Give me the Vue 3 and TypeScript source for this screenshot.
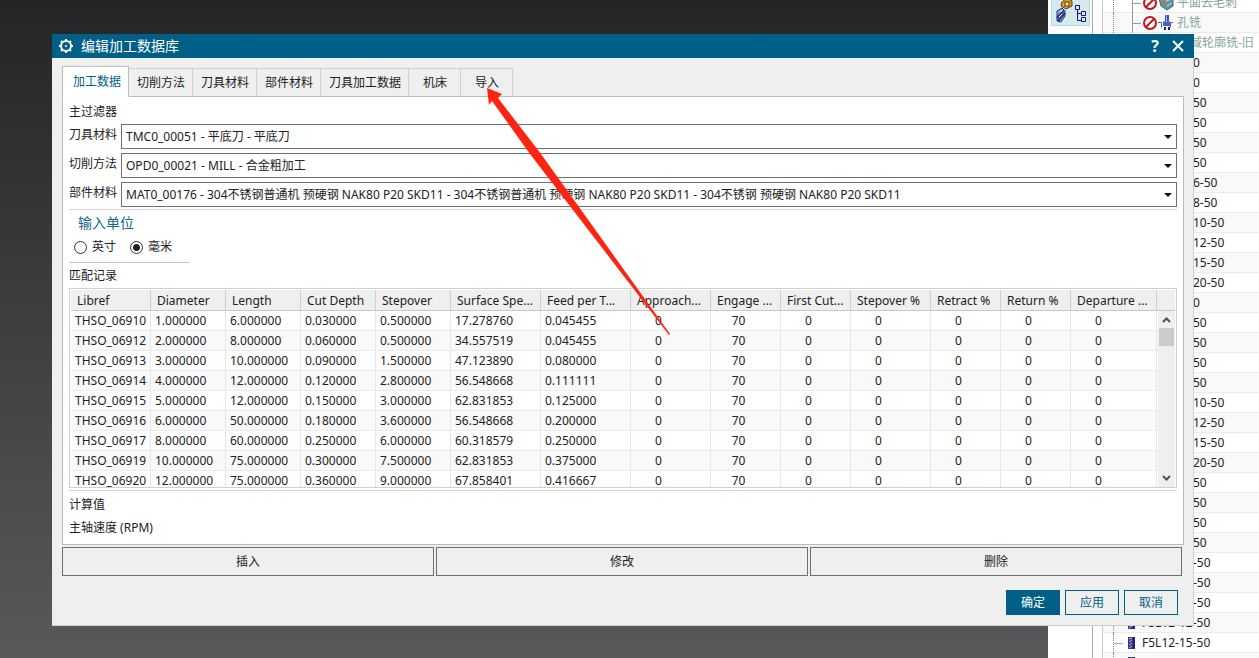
<script setup lang="ts">
import { ref } from 'vue'

interface TreeRow {
  text: string
  kind: 'operation' | 'group' | 'tail' | 'tool'
  icon?: 'mill' | 'hole' | 'tool'
}

const tails = [
  '0', '0', '50', '50', '50', '50', '6-50', '8-50', '10-50', '12-50', '15-50', '20-50',
  '0', '50', '50', '50', '50', '10-50', '12-50', '15-50', '20-50',
  '50', '50', '50', '50', '-50', '-50', '-50',
]

const treeRows: TreeRow[] = [
  { text: '平面去毛刺', kind: 'operation', icon: 'mill' },
  { text: '孔铣', kind: 'operation', icon: 'hole' },
  { text: '域轮廓铣-旧', kind: 'group' },
  ...tails.map((text): TreeRow => ({ text, kind: 'tail' })),
  { text: 'F5L12-12-50', kind: 'tool', icon: 'tool' },
  { text: 'F5L12-15-50', kind: 'tool', icon: 'tool' },
  { text: '', kind: 'tool', icon: 'tool' },
]

const tabs = ['加工数据', '切削方法', '刀具材料', '部件材料', '刀具加工数据', '机床', '导入']
const activeTab = ref('加工数据')

const filters = [
  { id: 'tool-material', label: '刀具材料', value: 'TMC0_00051 - 平底刀 - 平底刀' },
  { id: 'cut-method', label: '切削方法', value: 'OPD0_00021 - MILL - 合金粗加工' },
  {
    id: 'part-material',
    label: '部件材料',
    value: 'MAT0_00176 - 304不锈钢普通机 预硬钢 NAK80 P20 SKD11 - 304不锈钢普通机 预硬钢 NAK80 P20 SKD11 - 304不锈钢 预硬钢 NAK80 P20 SKD11',
  },
]

const unit = ref('mm')

const columns = [
  'Libref', 'Diameter', 'Length', 'Cut Depth', 'Stepover', 'Surface Spe...', 'Feed per T...',
  'Approach...', 'Engage ...', 'First Cut...', 'Stepover %', 'Retract %', 'Return %', 'Departure ...',
]

const percents = ['0', '70', '0', '0', '0', '0', '0']

const records: string[][] = [
  ['THSO_06910', '1.000000', '6.000000', '0.030000', '0.500000', '17.278760', '0.045455'],
  ['THSO_06912', '2.000000', '8.000000', '0.060000', '0.500000', '34.557519', '0.045455'],
  ['THSO_06913', '3.000000', '10.000000', '0.090000', '1.500000', '47.123890', '0.080000'],
  ['THSO_06914', '4.000000', '12.000000', '0.120000', '2.800000', '56.548668', '0.111111'],
  ['THSO_06915', '5.000000', '12.000000', '0.150000', '3.000000', '62.831853', '0.125000'],
  ['THSO_06916', '6.000000', '50.000000', '0.180000', '3.600000', '56.548668', '0.200000'],
  ['THSO_06917', '8.000000', '60.000000', '0.250000', '6.000000', '60.318579', '0.250000'],
  ['THSO_06919', '10.000000', '75.000000', '0.300000', '7.500000', '62.831853', '0.375000'],
  ['THSO_06920', '12.000000', '75.000000', '0.360000', '9.000000', '67.858401', '0.416667'],
]

const editActions = ['插入', '修改', '删除']
</script>

<template>
  <div class="desktop">
    <div class="viewport"></div>
    <div class="strip">
      <button class="strip-tool" type="button" aria-label="程序视图">
        <svg width="38" height="26" viewBox="0 0 38 26" aria-hidden="true">
          <path d="M5 11l5-3 3 3v5l-4 6-4-1z" fill="#8fa6dc" stroke="#26357f" />
          <path d="M5 18l7-8M6 21l7-8" stroke="#26357f" stroke-width="2" />
          <path d="M8 12l3-2M7 17l3-3" stroke="#fff" />
          <path d="M10 2l5-4 5 3v5l-6 3-5-3z" fill="#d99b3e" stroke="#5e3a12" />
          <rect x="13" y="2" width="4" height="4" fill="#ffe680" stroke="#5e3a12" />
          <path d="M25.500 9.500v11h4M25.500 13.500h4" fill="none" stroke="#10147c" />
          <path d="M23.500 5.500h4v4h-4zM29.500 11.500h4v4h-4zM29.500 17.500h4v4h-4z" fill="#d5eef2" stroke="#10147c" />
        </svg>
      </button>
    </div>
    <div class="tree">
      <div v-for="(row, i) in treeRows" :key="i" class="tree-row" :class="row.kind">
        <svg v-if="row.kind === 'operation'" class="ban" width="15" height="16" viewBox="0 0 15 16" aria-hidden="true">
          <circle cx="7" cy="8" r="6" fill="#fff" stroke="#c4141c" stroke-width="2" />
          <path d="M3 12l8-8" stroke="#c4141c" stroke-width="2" />
        </svg>
        <svg v-if="row.icon === 'mill'" class="op-icon" width="16" height="16" viewBox="0 0 16 16" aria-hidden="true">
          <path d="M1 4l7-3 7 3v7l-6 4-6-4z" fill="#5b98a4" stroke="#47666f" />
          <path d="M3 4l5 2v5l-4-2z" fill="#9b8062" />
          <path d="M8 6l6-2M9 11l5-3" stroke="#b6dde4" />
        </svg>
        <svg v-if="row.icon === 'hole'" class="op-icon" width="16" height="16" viewBox="0 0 16 16" aria-hidden="true">
          <path d="M7 0h4v6H7z" fill="#3e49bd" />
          <path d="M8 0h1v6H8z" fill="#aab2f5" />
          <path d="M0 7.500h3.500v5M15 7.500h-2.500v5" fill="none" stroke="#347080" />
          <path d="M5 6h7v5H5z" fill="#7e89e6" />
          <path d="M5 8h7M5 10h7" stroke="#252e8f" />
          <path d="M6 12h2v3H6zM10 12h2v3h-2z" fill="#18216d" />
        </svg>
        <svg v-if="row.icon === 'tool'" class="tool-icon" width="8" height="14" viewBox="0 0 8 14" aria-hidden="true">
          <path d="M0 1h7v12H0z" fill="#34338f" />
          <path d="M1 3l3-1M1 6l3-2M1 9l3-2M1 12l3-2" stroke="#b8b8f0" />
          <path d="M5 1h2v12H5z" fill="#222266" />
        </svg>
        <span>{{ row.text }}</span>
      </div>
    </div>

    <section class="dialog" role="dialog" aria-labelledby="dialog-title">
      <header class="titlebar">
        <svg width="16" height="16" viewBox="0 0 16 16" aria-hidden="true">
          <circle cx="8" cy="8" r="5" fill="none" stroke="#fff" stroke-width="2" />
          <path d="M8 1v2M8 13v2M1 8h2M13 8h2M3 3l1 1M12 12l1 1M3 13l1-1M12 4l1-1" stroke="#fff" stroke-width="2" />
          <circle cx="8" cy="8" r="1" fill="#fff" />
        </svg>
        <h1 id="dialog-title">编辑加工数据库</h1>
        <button class="title-button help" type="button" aria-label="帮助">?</button>
        <button class="title-button" type="button" aria-label="关闭">
          <svg width="12" height="12" viewBox="0 0 12 12" aria-hidden="true">
            <path d="M1 1l10 10M11 1L1 11" stroke="#fff" stroke-width="2" />
          </svg>
        </button>
      </header>

      <div class="content">
        <nav class="tabs" role="tablist">
          <button
            v-for="tab in tabs"
            :key="tab"
            type="button"
            role="tab"
            :class="{ active: tab === activeTab }"
            :aria-selected="tab === activeTab"
            @click="activeTab = tab"
          >{{ tab }}</button>
        </nav>

        <div class="panel">
          <h2 class="caption">主过滤器</h2>
          <div v-for="filter in filters" :key="filter.id" class="filter">
            <label :for="filter.id">{{ filter.label }}</label>
            <div class="select-box">
              <select :id="filter.id">
                <option>{{ filter.value }}</option>
              </select>
              <svg width="8" height="4" viewBox="0 0 8 4" aria-hidden="true">
                <path d="M0 0h8L4 4z" fill="#111" />
              </svg>
            </div>
          </div>

          <fieldset class="units">
            <legend>输入单位</legend>
            <div class="radios">
              <label><input v-model="unit" type="radio" name="unit" value="inch" />英寸</label>
              <label><input v-model="unit" type="radio" name="unit" value="mm" />毫米</label>
            </div>
          </fieldset>

          <h2 class="caption records-caption">匹配记录</h2>
          <div class="records">
            <table>
              <colgroup>
                <col class="w80" /><col class="w75" /><col class="w75" /><col class="w75" /><col class="w75" />
                <col class="w90" /><col class="w90" /><col class="w80" /><col class="w70" /><col class="w70" />
                <col class="w80" /><col class="w70" /><col class="w70" /><col class="w86" /><col />
              </colgroup>
              <thead>
                <tr>
                  <th v-for="column in columns" :key="column" scope="col">{{ column }}</th>
                  <td></td>
                </tr>
              </thead>
              <tbody>
                <tr v-for="record in records" :key="record[0]">
                  <td v-for="(value, i) in record" :key="i">{{ value }}</td>
                  <td v-for="(value, i) in percents" :key="'p' + i" class="percent"><span>{{ value }}</span></td>
                  <td></td>
                </tr>
              </tbody>
            </table>
            <div class="scrollbar">
              <svg width="9" height="6" viewBox="0 0 9 6" aria-hidden="true">
                <path d="M1 5l3.500-3.500L8 5" fill="none" stroke="#505050" stroke-width="2" />
              </svg>
              <div class="thumb"></div>
              <svg width="9" height="6" viewBox="0 0 9 6" aria-hidden="true">
                <path d="M1 1l3.500 3.500L8 1" fill="none" stroke="#505050" stroke-width="2" />
              </svg>
            </div>
          </div>

          <div class="computed">
            <h2>计算值</h2>
            <p>主轴速度 (RPM)</p>
          </div>
        </div>

        <div class="edit-actions">
          <button v-for="action in editActions" :key="action" type="button">{{ action }}</button>
        </div>

        <footer>
          <button class="primary" type="button">确定</button>
          <button type="button">应用</button>
          <button type="button">取消</button>
        </footer>
      </div>
    </section>

    <svg class="pointer" width="186" height="250" viewBox="0 0 186 250" aria-hidden="true">
      <path d="M1 2L16 8l-4 4L55 68 184 248l-1 1L44 68 6 15l-3 4z" fill="#ff2412" />
    </svg>
  </div>
</template>

<style>
body {
  margin: 0;
  overflow: hidden;
}
</style>

<style scoped>
* {
  box-sizing: border-box;
}

.desktop {
  position: relative;
  display: grid;
  grid-template-columns: 1fr 55px 156px;
  height: 100vh;
  overflow: hidden;
  font: 12px/20px "Noto Sans", "Noto Sans CJK SC", sans-serif;
  color: #222;
  background: #fff;
}

.desktop button {
  margin: 0;
  padding: 0;
  border: 0;
  background: none;
  font: inherit;
  color: inherit;
}

.desktop svg {
  display: block;
  flex: none;
}

h1,
h2,
p {
  margin: 0;
  font: inherit;
}

.viewport {
  background: linear-gradient(#242527, #58595b);
}

.strip {
  padding: 0 2px 0 3px;
  border-right: 1px solid #c9c9c9;
  background: linear-gradient(90deg, #fff 44px, #a9a9a9 44px, #a9a9a9 45px, #fff 45px);
}

.desktop .strip-tool {
  display: block;
  width: 39px;
  height: 26px;
  border: 1px solid #b7d9df;
  border-top: 0;
  background: #d5eaed;
}

.tree {
  height: 100vh;
  margin-top: -7px;
}

.tree-row {
  display: flex;
  align-items: center;
  height: 20px;
  border-bottom: 1px solid #ebebeb;
  white-space: nowrap;
}

.tree-row:nth-child(even) {
  background: #f9f9f9;
}

.operation {
  padding-left: 10px;
  color: #85a596;
}

.operation::before {
  content: "";
  flex: none;
  width: 29px;
  height: 20px;
  border-left: 1px dotted #888;
  background:
    linear-gradient(#999, #999) 18px 0 / 1px 20px no-repeat,
    linear-gradient(#999, #999) 18px 10px / 9px 1px no-repeat;
}

.op-icon {
  margin-right: 3px;
}

.group {
  padding-left: 87px;
  color: #85a596;
}

.tail {
  padding-left: 90px;
}

.tool {
  padding-left: 10px;
}

.tool::before {
  content: "";
  flex: none;
  width: 14px;
  height: 20px;
  border-left: 1px dotted #888;
  background: linear-gradient(#aaa, #aaa) 0 10px / 9px 1px no-repeat;
}

.tool-icon {
  margin-right: 6px;
}

.dialog {
  position: absolute;
  top: 34px;
  right: 65px;
  left: 52px;
  border-right: 1px solid #d0d0d0;
  border-bottom: 1px solid #d0d0d0;
  background: #efefef;
}

.titlebar {
  display: flex;
  align-items: center;
  height: 24px;
  margin-right: -1px;
  padding: 0 8px 0 6px;
  background: #005f87;
  color: #fff;
}

.titlebar h1 {
  flex: 1;
  padding-left: 7px;
  font-size: 14px;
}

.desktop .title-button {
  display: grid;
  place-items: center;
  width: 16px;
  height: 20px;
  margin-left: 7px;
}

.desktop .help {
  font-size: 16px;
  font-weight: 700;
}

.content {
  padding: 8px 9px 10px 10px;
}

.tabs {
  display: flex;
  align-items: flex-end;
  height: 31px;
  margin-bottom: -1px;
}

.desktop .tabs button {
  height: 29px;
  padding: 1px 7px 0 8px;
  border: 1px solid #d0d0d0;
  border-left: 0;
  border-bottom-color: #bcbcbc;
}

.desktop .tabs button:nth-child(n + 6) {
  padding: 1px 13px 0 14px;
}

.desktop .tabs .active {
  position: relative;
  height: 31px;
  padding: 0 7px 0 10px;
  border: 1px solid #bcbcbc;
  border-bottom-color: #fff;
  background: #fff;
  color: #005f87;
}

.panel {
  padding: 5px 6px 0;
  border: 1px solid #bcbcbc;
  background: #fff;
}

.caption {
  height: 22px;
}

.filter {
  display: flex;
  gap: 4px;
  margin-bottom: 4px;
}

.filter label {
  width: 48px;
  padding-top: 1px;
}

.select-box {
  position: relative;
  flex: 1;
  min-width: 0;
}

.select-box select {
  display: block;
  width: 100%;
  height: 25px;
  padding: 0 20px 0 4px;
  border: 1px solid #707070;
  border-radius: 0;
  appearance: none;
  background: #fff;
  font: inherit;
  color: inherit;
}

.select-box svg {
  position: absolute;
  top: 11px;
  right: 5px;
}

.units {
  position: relative;
  height: 55px;
  margin: -2px 0 0;
  padding: 3px 0 0;
  border: 0;
  border-top: 1px solid #d4d4d4;
}

.units legend {
  float: left;
  width: 100%;
  padding: 0 0 0 9px;
  font-size: 14px;
  color: #12678b;
}

.radios {
  display: flex;
  gap: 14px;
  width: 120px;
  height: 30px;
  padding: 4px 0 0 5px;
  clear: both;
  border-bottom: 1px solid #c4c4c4;
}

.radios label {
  display: flex;
  align-items: center;
  gap: 5px;
  height: 20px;
  white-space: nowrap;
}

.radios input {
  flex: none;
  width: 13px;
  height: 13px;
  margin: 0;
  border: 1px solid #333;
  border-radius: 50%;
  appearance: none;
  background: #fff;
}

.radios input:checked {
  background: radial-gradient(circle, #222 3px, #fff 4px);
}

.records-caption {
  height: 24px;
  padding-top: 2px;
}

.records {
  position: relative;
  height: 200px;
  padding: 1px;
  overflow: hidden;
  border: 1px solid #d0d0d0;
}

table {
  width: 100%;
  border-collapse: separate;
  border-spacing: 0;
  table-layout: fixed;
}

.w70 { width: 70px; }
.w75 { width: 75px; }
.w80 { width: 80px; }
.w86 { width: 86px; }
.w90 { width: 90px; }

th,
td {
  height: 20px;
  padding: 0 0 0 4px;
  overflow: hidden;
  border-right: 1px solid #e6e6e6;
  border-bottom: 1px solid #ebebeb;
  font-weight: 400;
  line-height: 19px;
  text-align: left;
  white-space: nowrap;
}

thead th,
thead td {
  height: 21px;
  padding-left: 6px;
  border-right-color: #cfcfcf;
  border-bottom-color: #c8c8c8;
  background: #efefef;
}

th:last-child,
td:last-child {
  border-right: 0;
}

tbody tr:nth-child(even) {
  background: #f9f9f9;
}

td.percent {
  padding: 0;
}

.percent span {
  display: block;
  width: 55px;
  text-align: center;
}

.scrollbar {
  position: absolute;
  top: 22px;
  right: 1px;
  bottom: 0;
  display: flex;
  flex-direction: column;
  align-items: center;
  width: 17px;
  padding: 6px 0;
  background: #efefef;
}

.thumb {
  width: 15px;
  height: 18px;
  margin: 5px 0 auto;
  background: #cbcbcb;
}

.computed {
  margin-top: 2px;
  padding-top: 4px;
  border-top: 1px solid #d4d4d4;
}

.computed p {
  padding: 3px 0 6px;
}

.edit-actions {
  display: grid;
  grid-template-columns: repeat(3, 1fr);
  gap: 2px;
  margin: 2px 2px 14px 0;
}

.desktop .edit-actions button {
  height: 29px;
  border: 1px solid #707070;
}

footer {
  display: flex;
  justify-content: flex-end;
  gap: 5px;
  padding-right: 6px;
}

.desktop footer button {
  width: 54px;
  height: 25px;
  border: 1px solid #005f87;
  color: #005f87;
}

.desktop footer .primary {
  background: #005f87;
  color: #fff;
}

.pointer {
  position: absolute;
  top: 86px;
  left: 486px;
}
</style>
